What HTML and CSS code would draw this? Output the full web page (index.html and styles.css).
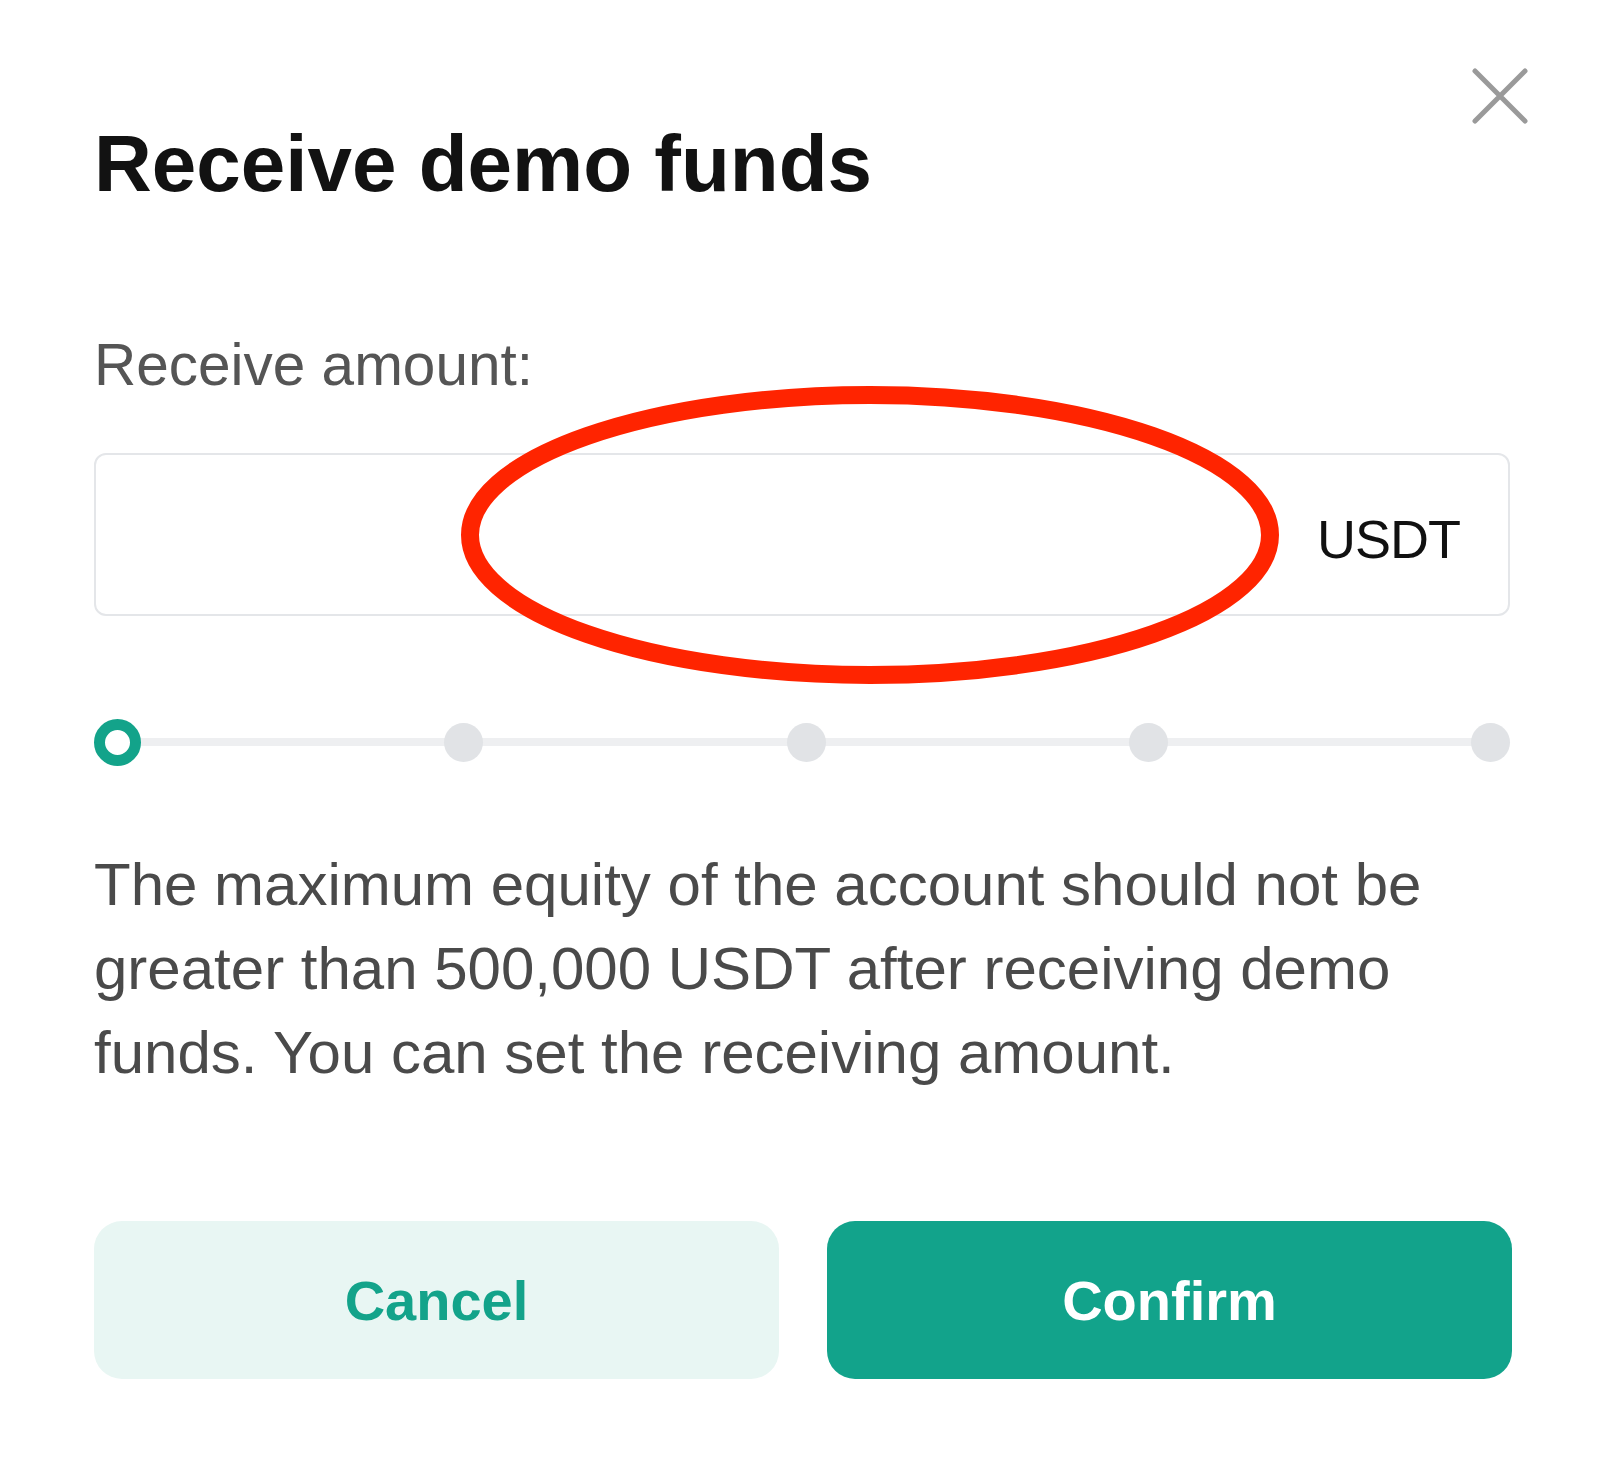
FILE: index.html
```html
<!DOCTYPE html>
<html lang="en">
<head>
<meta charset="utf-8">
<title>Receive demo funds</title>
<link rel="stylesheet" href="styles.css">
</head>
<body>
<div class="dialog">
  <button class="close" aria-label="Close">
    <svg width="56" height="56" viewBox="0 0 56 56"><path d="M3 3 L53 53 M53 3 L3 53" stroke="#9a9a9a" stroke-width="5" stroke-linecap="round" fill="none"/></svg>
  </button>
  <h1 class="title">Receive demo funds</h1>
  <div class="label">Receive amount:</div>
  <div class="field">
    <input class="amount" type="text" value="">
    <span class="unit">USDT</span>
    <svg class="mark" width="818" height="298" viewBox="0 0 818 298"><ellipse cx="409" cy="149" rx="400" ry="140" fill="none" stroke="#ff2400" stroke-width="18"/></svg>
  </div>
  <div class="slider">
    <div class="track"></div>
    <div class="stops">
      <span class="stop active"></span>
      <span class="stop"></span>
      <span class="stop"></span>
      <span class="stop"></span>
      <span class="stop"></span>
    </div>
  </div>
  <p class="note">The maximum equity of the account should not be greater than 500,000 USDT after receiving demo funds. You can set the receiving amount.</p>
  <div class="actions">
    <button class="btn cancel">Cancel</button>
    <button class="btn confirm">Confirm</button>
  </div>
</div>
</body>
</html>
```
FILE: styles.css
```css
* { box-sizing: border-box; }
html, body { margin: 0; padding: 0; background: #ffffff; }
body { font-family: "Liberation Sans", Arial, sans-serif; }

.dialog {
  position: relative;
  width: 1600px;
  height: 1468px;
  padding: 116px 88px 0 94px;
  display: flex;
  flex-direction: column;
}

.close {
  position: absolute;
  left: 1472px;
  top: 68px;
  width: 56px;
  height: 56px;
  padding: 0;
  border: 0;
  background: transparent;
  display: flex;
}

.title {
  margin: 0;
  font-size: 80px;
  line-height: 96px;
  font-weight: 700;
  color: #121212;
}

.label {
  margin-top: 117px;
  font-size: 58.5px;
  line-height: 72px;
  color: #555555;
}

.field {
  position: relative;
  margin-top: 52px;
  width: 1416px;
  height: 163px;
  border: 2px solid #e4e6e9;
  border-radius: 12px;
  display: flex;
  align-items: center;
  padding: 8px 48px 0 30px;
}

.amount {
  flex: 1;
  min-width: 0;
  border: 0;
  outline: none;
  background: transparent;
  font-family: inherit;
  font-size: 56px;
  color: #121212;
}

.unit {
  font-size: 54px;
  color: #111111;
  letter-spacing: -1px;
}

.mark {
  position: absolute;
  left: 365px;
  top: -69px;
  pointer-events: none;
}

.slider {
  position: relative;
  margin-top: 101px;
  width: 1418px;
  height: 50px;
  display: flex;
  align-items: center;
}

.track {
  position: absolute;
  left: 24px;
  right: 24px;
  top: 21px;
  height: 8px;
  background: #eeeff1;
}

.stops {
  position: relative;
  width: 100%;
  display: flex;
  justify-content: space-between;
  align-items: center;
  padding: 0 2px 0 0;
}

.stop {
  width: 39px;
  height: 39px;
  border-radius: 50%;
  background: #e1e3e6;
}

.stop.active {
  width: 47px;
  height: 47px;
  background: #ffffff;
  border: 11px solid #13a38a;
}

.note {
  margin: 76px 0 0 0;
  width: 1418px;
  font-size: 60px;
  line-height: 84px;
  color: #4a4a4a;
}

.actions {
  margin-top: 126px;
  width: 1418px;
  display: grid;
  grid-template-columns: 1fr 1fr;
  gap: 48px;
}

.btn {
  height: 158px;
  border: 0;
  border-radius: 28px;
  font-family: "Liberation Sans", Arial, sans-serif;
  font-size: 56px;
  font-weight: 700;
}

.cancel {
  background: #e8f6f3;
  color: #13a38a;
}

.confirm {
  background: #12a38b;
  color: #ffffff;
}
```
